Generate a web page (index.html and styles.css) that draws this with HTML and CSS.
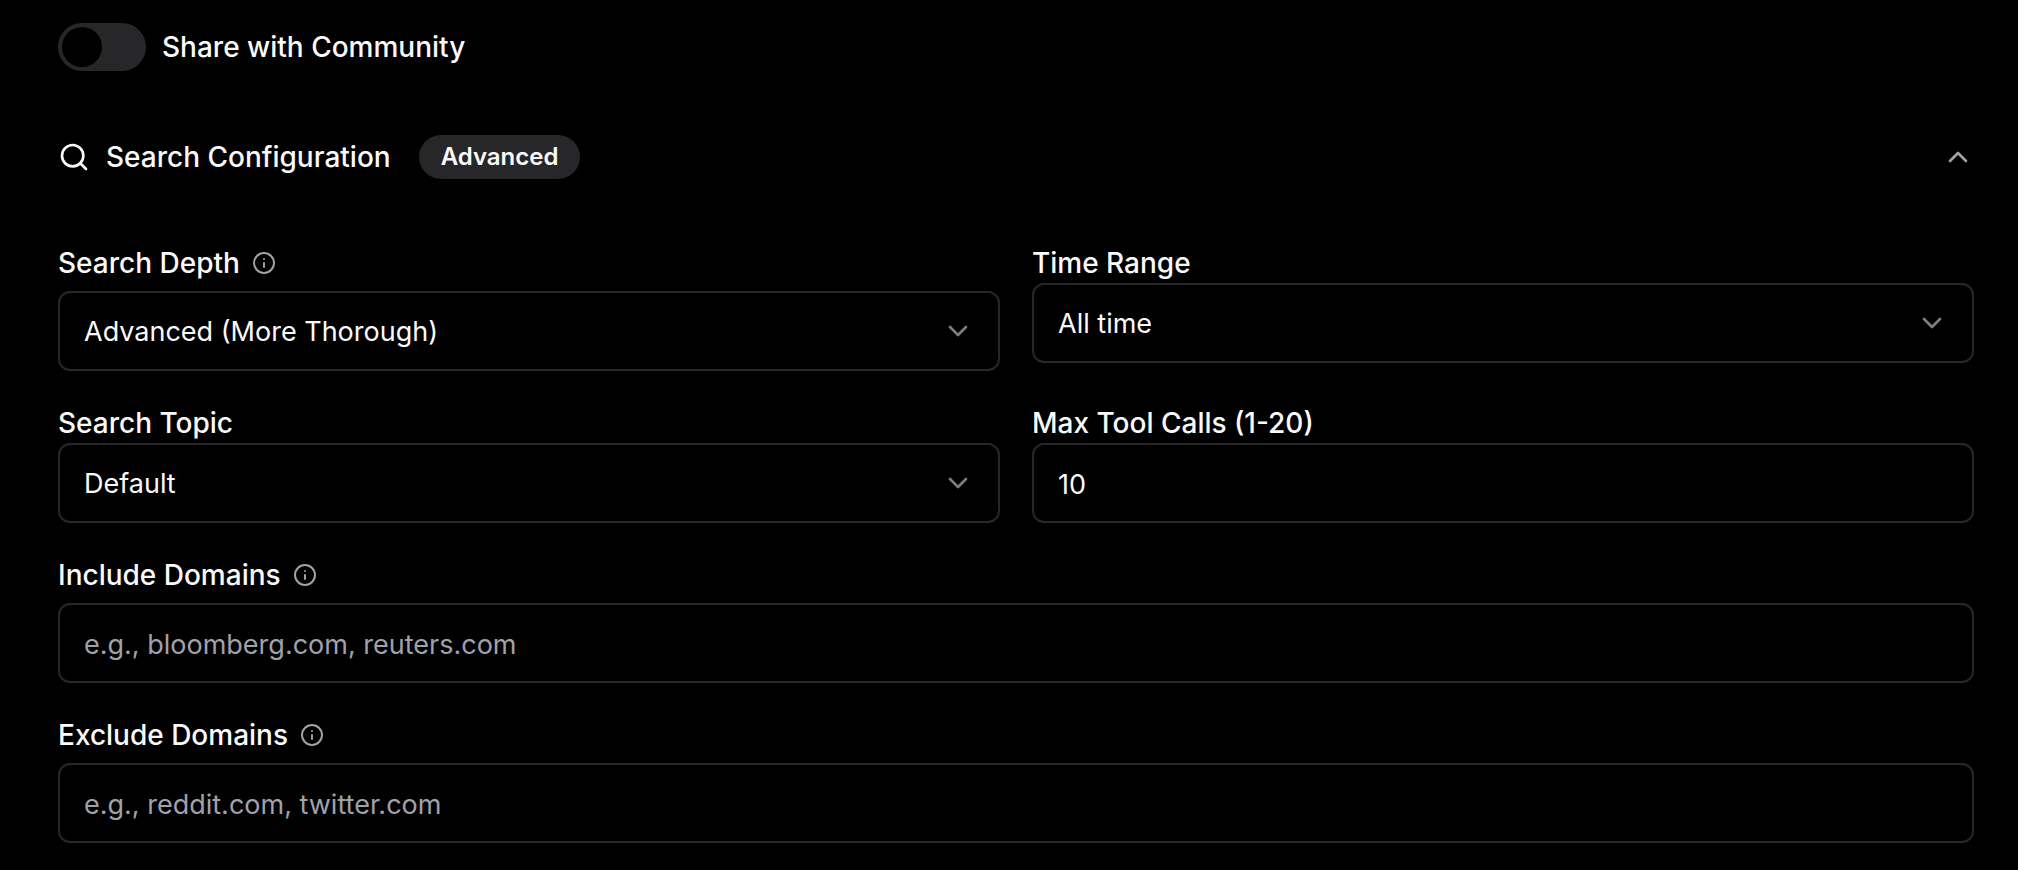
FILE: index.html
```html
<!DOCTYPE html>
<html lang="en">
<head>
<meta charset="utf-8">
<meta name="viewport" content="width=device-width, initial-scale=1">
<title>Search Configuration</title>
<link rel="stylesheet" href="styles.css">
</head>
<body>
<svg class="sprite" aria-hidden="true">
  <symbol id="chevron-down" viewBox="0 0 24 24"><path d="m6 9 6 6 6-6"/></symbol>
  <symbol id="chevron-up" viewBox="0 0 24 24"><path d="m18 15-6-6-6 6"/></symbol>
  <symbol id="search" viewBox="0 0 24 24"><circle cx="11" cy="11" r="8"/><path d="m21 21-4.3-4.3"/></symbol>
  <symbol id="info" viewBox="0 0 24 24"><circle cx="12" cy="12" r="10"/><path d="M12 16v-4M12 8h.01"/></symbol>
</svg>
<main class="settings">
  <label class="share">
    <input class="switch" type="checkbox" role="switch">
    <span>Share with Community</span>
  </label>

  <section class="config">
    <button class="config-header" type="button" aria-expanded="true" aria-controls="search-fields">
      <svg class="icon" aria-hidden="true"><use href="#search"/></svg>
      <span>Search Configuration</span>
      <span class="badge">Advanced</span>
      <svg class="icon icon-toggle" aria-hidden="true"><use href="#chevron-up"/></svg>
    </button>

    <form class="fields" id="search-fields">
      <div class="field">
        <div class="label-row">
          <label class="label" for="depth">Search Depth</label>
          <button class="info" type="button" aria-label="About search depth"><svg class="icon-info" aria-hidden="true"><use href="#info"/></svg></button>
        </div>
        <div class="select">
          <select class="control" id="depth"><option>Advanced (More Thorough)</option></select>
          <svg class="icon icon-select" aria-hidden="true"><use href="#chevron-down"/></svg>
        </div>
      </div>

      <div class="field">
        <label class="label" for="range">Time Range</label>
        <div class="select">
          <select class="control" id="range"><option>All time</option></select>
          <svg class="icon icon-select" aria-hidden="true"><use href="#chevron-down"/></svg>
        </div>
      </div>

      <div class="field">
        <label class="label" for="topic">Search Topic</label>
        <div class="select">
          <select class="control" id="topic"><option>Default</option></select>
          <svg class="icon icon-select" aria-hidden="true"><use href="#chevron-down"/></svg>
        </div>
      </div>

      <div class="field">
        <label class="label" for="calls">Max Tool Calls (1-20)</label>
        <input class="control" id="calls" type="number" min="1" max="20" value="10">
      </div>

      <div class="field field-wide">
        <div class="label-row">
          <label class="label" for="include">Include Domains</label>
          <button class="info" type="button" aria-label="About included domains"><svg class="icon-info" aria-hidden="true"><use href="#info"/></svg></button>
        </div>
        <input class="control" id="include" type="text" placeholder="e.g., bloomberg.com, reuters.com">
      </div>

      <div class="field field-wide">
        <div class="label-row">
          <label class="label" for="exclude">Exclude Domains</label>
          <button class="info" type="button" aria-label="About excluded domains"><svg class="icon-info" aria-hidden="true"><use href="#info"/></svg></button>
        </div>
        <input class="control" id="exclude" type="text" placeholder="e.g., reddit.com, twitter.com">
      </div>
    </form>
  </section>
</main>
</body>
</html>
```

FILE: styles.css
```css
:root {
  --background: #000;
  --foreground: #fafafa;
  --muted: #27272a;
  --muted-foreground: #a1a1aa;
  --border: #272727;
}

* {
  box-sizing: border-box;
}

body {
  margin: 0;
  background: var(--background);
  color: var(--foreground);
  font: 500 28px/40px Inter, "Liberation Sans", sans-serif;
}

button,
input,
select {
  margin: 0;
  font: inherit;
  color: inherit;
}

button {
  padding: 0;
  border: 0;
  background: none;
  cursor: pointer;
}

svg {
  flex: none;
  fill: none;
  stroke: currentColor;
  stroke-width: 2;
  stroke-linecap: round;
  stroke-linejoin: round;
}

.sprite {
  display: none;
}

.settings {
  display: flex;
  flex-direction: column;
  gap: 64px;
  padding: 23px 44px 27px 58px;
}

.share {
  display: flex;
  align-items: center;
  align-self: flex-start;
  gap: 16px;
}

.switch {
  appearance: none;
  display: flex;
  width: 88px;
  height: 48px;
  padding: 4px;
  border-radius: 24px;
  background: var(--muted);
  cursor: pointer;
}

.switch::before {
  content: "";
  width: 40px;
  height: 40px;
  border-radius: 50%;
  background: var(--background);
}

.switch:checked {
  justify-content: flex-end;
  background: var(--foreground);
}

.config {
  display: flex;
  flex-direction: column;
  gap: 64px;
}

.config-header {
  display: flex;
  align-items: center;
  gap: 16px;
  width: 100%;
}

.icon {
  width: 32px;
  height: 32px;
}

.icon-toggle {
  margin-left: auto;
  color: var(--muted-foreground);
}

.badge {
  margin-left: 12px;
  padding: 6px 22px;
  border-radius: 22px;
  background: var(--muted);
  font-size: 24px;
  font-weight: 600;
  line-height: 32px;
}

.fields {
  display: grid;
  grid-template-columns: repeat(2, minmax(0, 1fr));
  align-items: start;
  gap: 32px;
}

.field-wide {
  grid-column: 1 / -1;
}

.label {
  display: block;
}

.label-row {
  display: flex;
  align-items: center;
  gap: 12px;
  margin-bottom: 8px;
}

.info {
  display: flex;
  color: var(--muted-foreground);
}

.icon-info {
  width: 24px;
  height: 24px;
}

.control {
  appearance: none;
  display: block;
  width: 100%;
  height: 80px;
  padding: 2px 24px 0;
  border: 2px solid var(--border);
  border-radius: 12px;
  outline: none;
  background: var(--background);
  font-size: 27px;
  font-weight: 400;
}

.control:focus-visible {
  border-color: var(--muted-foreground);
}

.control::placeholder {
  color: var(--muted-foreground);
  opacity: 1;
}

.control[type="number"] {
  appearance: textfield;
}

.select {
  display: grid;
  align-items: center;
}

.select > * {
  grid-area: 1 / 1;
}

.icon-select {
  justify-self: end;
  margin-right: 26px;
  opacity: 0.5;
  pointer-events: none;
}
```
